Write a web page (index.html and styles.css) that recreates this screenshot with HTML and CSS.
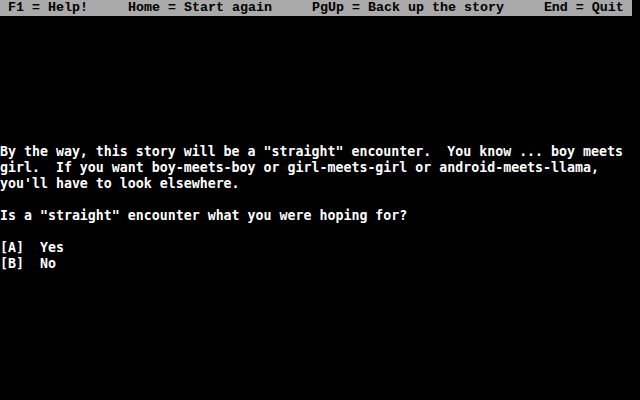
FILE: index.html
```html
<!DOCTYPE html>
<html>
<head>
<meta charset="utf-8">
<link rel="stylesheet" href="styles.css">
</head>
<body>
<div class="screen">
<div class="bar"><pre class="bar-text"> F1 = Help!     Home = Start again     PgUp = Back up the story     End = Quit</pre></div>
<pre class="body-text">By the way, this story will be a "straight" encounter.  You know ... boy meets
girl.  If you want boy-meets-boy or girl-meets-girl or android-meets-llama,
you'll have to look elsewhere.

Is a "straight" encounter what you were hoping for?

[A]  Yes
[B]  No</pre>
</div>
</body>
</html>
```
FILE: styles.css
```css
html, body {
  margin: 0;
  padding: 0;
  background: #000;
}
.screen {
  width: 640px;
  height: 400px;
  background: #000;
  overflow: hidden;
}
.bar {
  width: 632px;
  height: 16px;
  background: #aaaaaa;
}
.bar-text {
  margin: 0;
  font-family: "Liberation Mono", "DejaVu Sans Mono", monospace;
  font-weight: bold;
  font-size: 13.333px;
  line-height: 16px;
  color: #000;
  white-space: pre;
}
.body-text {
  margin: 0;
  padding-top: 128px;
  font-family: "DejaVu Sans Mono", monospace;
  font-weight: bold;
  font-size: 13.288px;
  line-height: 16px;
  color: #ffffff;
  white-space: pre;
}
```
